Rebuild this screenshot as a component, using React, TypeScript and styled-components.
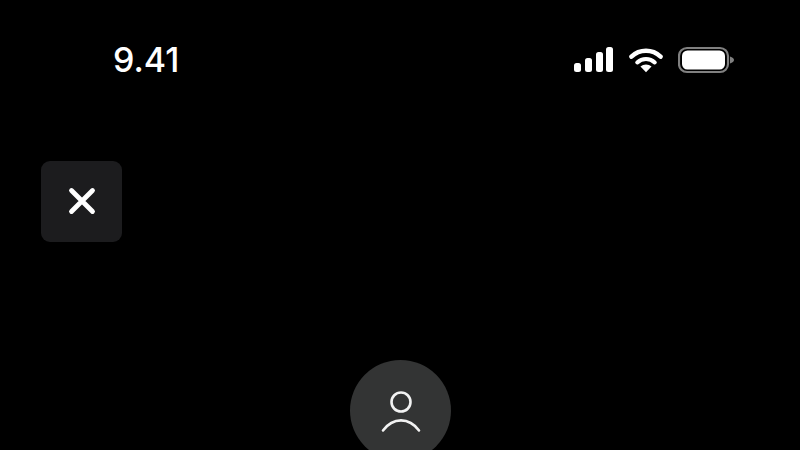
import React from 'react'
import styled, { createGlobalStyle } from 'styled-components'

const GlobalStyle = createGlobalStyle`
  html, body {
    margin: 0;
    padding: 0;
    background: #000;
  }
`

const Screen = styled.div`
  width: 800px;
  height: 450px;
  overflow: hidden;
  background: #000;
  display: flex;
  flex-direction: column;
  font-family: Inter, 'Liberation Sans', sans-serif;
`

const StatusBar = styled.div`
  height: 46px;
  flex-shrink: 0;
  margin-top: 37px;
  padding: 0 66px 0 113px;
  display: flex;
  align-items: center;
  justify-content: space-between;
`

const Time = styled.span`
  color: #fff;
  font-size: 34px;
  font-weight: 500;
  line-height: 46px;
`

const StatusIcons = styled.div`
  display: flex;
  align-items: center;
  gap: 15px;
`

const CloseButton = styled.button`
  width: 81px;
  height: 81px;
  flex-shrink: 0;
  margin: 78px 0 0 41px;
  padding: 0 0 2px;
  border: 0;
  border-radius: 9px;
  background: #1c1c1e;
  display: flex;
  align-items: center;
  justify-content: center;
`

const Avatar = styled.div`
  width: 101px;
  height: 101px;
  flex-shrink: 0;
  margin: 118px 0 0 350px;
  border-radius: 50%;
  background: #333434;
  display: flex;
  align-items: flex-start;
  justify-content: center;
`

const AvatarIcon = styled.svg`
  margin-top: 30px;
`

const App: React.FC = () => (
  <Screen>
    <GlobalStyle />
    <StatusBar>
      <Time>9.41</Time>
      <StatusIcons>
        <svg width="40" height="26" viewBox="0 0 40 26" fill="#fff">
          <rect x="0" y="16" width="7" height="9" rx="2.5" />
          <rect x="11" y="11" width="7" height="14" rx="2.5" />
          <rect x="22" y="5" width="7" height="20" rx="2.5" />
          <rect x="32" y="0" width="7" height="25" rx="2.5" />
        </svg>
        <svg width="34" height="26" viewBox="0 0 35 26" fill="none" stroke="#fff">
          <path d="M2.5 9.5C11 1.5 24 1.5 32.5 9.5" strokeWidth="4.6" strokeLinecap="round" />
          <path d="M8.5 15.5C13.5 10.8 21.5 10.8 26.5 15.5" strokeWidth="4.2" strokeLinecap="round" />
          <path d="M17.5 25.5L11.8 19.8C15 17 20 17 23.2 19.8Z" fill="#fff" stroke="none" />
        </svg>
        <svg width="56" height="28" viewBox="0 0 56 28" fill="none">
          <rect x="1" y="2" width="49" height="24" rx="8" stroke="#808080" strokeWidth="2.2" />
          <rect x="4" y="4.5" width="43" height="19" rx="5.5" fill="#fff" />
          <path d="M52 10.5C54.5 11.5 56 12.5 56 14C56 15.5 54.5 16.5 52 17.5Z" fill="#808080" />
        </svg>
      </StatusIcons>
    </StatusBar>
    <CloseButton>
      <svg width="28" height="28" viewBox="0 0 28 28" fill="none" stroke="#fff" strokeWidth="4.8" strokeLinecap="round">
        <path d="M3.5 3.5L24.5 24.5M24.5 3.5L3.5 24.5" />
      </svg>
    </CloseButton>
    <Avatar>
      <AvatarIcon width="40" height="44" viewBox="0 0 40 44" fill="none" stroke="#f2f2f2" strokeWidth="2.6" strokeLinecap="round">
        <circle cx="20" cy="12" r="9.5" />
        <path d="M2 40.5C12 27 28 27 38 40.5" />
      </AvatarIcon>
    </Avatar>
  </Screen>
)

export default App
